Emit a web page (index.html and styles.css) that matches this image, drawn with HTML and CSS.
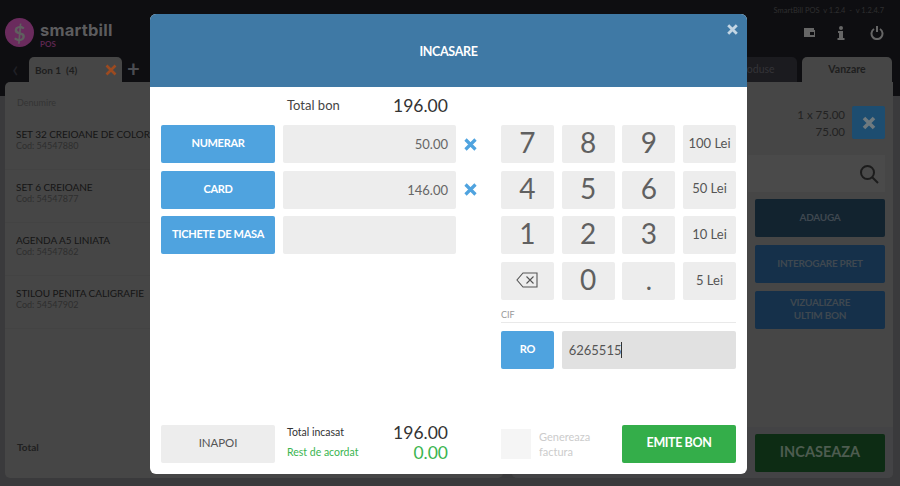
FILE: index.html
```html
<!DOCTYPE html>
<html lang="ro">
<head>
<meta charset="utf-8">
<title>SmartBill POS</title>
<link rel="stylesheet" href="styles.css">
</head>
<body>
<div class="app">
  <header class="topbar">
    <div class="logo">
      <span class="logo-mark">$</span>
      <div class="logo-text"><span class="logo-name">smartbill</span><span class="logo-sub">POS</span></div>
    </div>
    <div class="top-right">
      <div class="version">SmartBill POS &nbsp;v 1.2.4 &nbsp;- &nbsp;v 1.2.4.7</div>
      <div class="top-icons">
        <svg class="ti" width="12" height="12" viewBox="0 0 12 12"><path fill="#666" d="M1 1h10v2h1v7H1zM7 5v3h4V5z"/></svg>
        <svg class="ti" width="8" height="14" viewBox="0 0 8 14"><circle cx="4" cy="2" r="2" fill="#666"/><path fill="#666" d="M1 5h5v7h1.500v2H.5v-2H2V7H1z"/></svg>
        <svg class="ti" width="14" height="14" viewBox="0 0 14 14" fill="none" stroke="#666" stroke-width="2"><path d="M4 3a5.500 5.500 0 1 0 6 0M7 0v6"/></svg>
      </div>
    </div>
  </header>
  <div class="tabs">
    <div class="tabs-left">
      <span class="chev">&#8249;</span>
      <div class="tab bon"><span>Bon 1 &nbsp;(4)</span>
        <svg width="12" height="12" viewBox="0 0 12 12"><path d="M1.500 1.500l9 9M10.500 1.500l-9 9" stroke="#9c4a20" stroke-width="2.600"/></svg>
      </div>
      <span class="plus">+</span>
    </div>
    <div class="tabs-right">
      <div class="tab dark">Produse</div>
      <div class="tab active">Vanzare</div>
    </div>
  </div>
  <main class="panels">
    <section class="panel left">
      <div class="th">Denumire</div>
      <div class="row"><b>SET 32 CREIOANE DE COLOR</b><small>Cod: 54547880</small></div>
      <div class="row"><b>SET 6 CREIOANE</b><small>Cod: 54547877</small></div>
      <div class="row"><b>AGENDA A5 LINIATA</b><small>Cod: 54547862</small></div>
      <div class="row"><b>STILOU PENITA CALIGRAFIE</b><small>Cod: 54547902</small></div>
      <div class="total">Total</div>
    </section>
    <section class="panel right">
      <div class="summary">
        <div class="qty">1 x 75.00<br>75.00</div>
        <div class="del"><svg width="14" height="14" viewBox="0 0 14 14"><path d="M2 2l10 10M12 2L2 12" stroke="#6f7a7f" stroke-width="3.600"/></svg></div>
      </div>
      <div class="search"><svg width="20" height="20" viewBox="0 0 20 20" fill="none" stroke="#1c1c1c" stroke-width="2"><circle cx="8.500" cy="8.500" r="6.500"/><path d="M13 13l6 6"/></svg></div>
      <div class="act first">ADAUGA</div>
      <div class="act">INTEROGARE PRET</div>
      <div class="act">VIZUALIZARE<br>ULTIM BON</div>
      <div class="pay-zone"><div class="pay">INCASEAZA</div></div>
    </section>
  </main>
</div>

<div class="modal">
  <div class="modal-head">
    <h1>INCASARE</h1>
    <svg class="close" width="11" height="11" viewBox="0 0 11 11"><path d="M1.200 1.200l8.600 8.600M9.800 1.200l-8.600 8.600" stroke="#c3d6e4" stroke-width="2.800"/></svg>
  </div>
  <div class="modal-body">
    <div class="col-main">
      <div class="total-bon"><span>Total bon</span><strong>196.00</strong></div>
      <div class="pay-rows">
        <button class="btn blue">NUMERAR</button><div class="field">50.00</div>
        <svg class="rm" width="13" height="13" viewBox="0 0 13 13"><path d="M1.500 1.500l10 10M11.500 1.500l-10 10" stroke="#4fa3df" stroke-width="3.200"/></svg>
        <button class="btn blue">CARD</button><div class="field">146.00</div>
        <svg class="rm" width="13" height="13" viewBox="0 0 13 13"><path d="M1.500 1.500l10 10M11.500 1.500l-10 10" stroke="#4fa3df" stroke-width="3.200"/></svg>
        <button class="btn blue">TICHETE DE MASA</button><div class="field"></div><span></span>
      </div>
      <div class="foot-left">
        <button class="btn grey">INAPOI</button>
        <div class="sums">
          <div class="sum"><span>Total incasat</span><strong>196.00</strong></div>
          <div class="sum green"><span>Rest de acordat</span><strong>0.00</strong></div>
        </div>
      </div>
    </div>
    <div class="col-keys">
      <div class="keypad">
        <div class="key num">7</div><div class="key num">8</div><div class="key num">9</div><div class="key">100 Lei</div>
        <div class="key num">4</div><div class="key num">5</div><div class="key num">6</div><div class="key">50 Lei</div>
        <div class="key num">1</div><div class="key num">2</div><div class="key num">3</div><div class="key">10 Lei</div>
        <div class="key"><svg width="22" height="16" viewBox="0 0 22 16" fill="none" stroke="#555" stroke-width="1.100"><path d="M7 1h14v14H7L1 8z"/><path d="M10.500 4.500l7 7M17.500 4.500l-7 7"/></svg></div>
        <div class="key num">0</div><div class="key num dot">.</div><div class="key">5 Lei</div>
      </div>
      <div class="cif-label">CIF</div>
      <div class="cif">
        <button class="btn blue">RO</button>
        <div class="cif-input">6265515<i class="caret"></i></div>
      </div>
      <div class="foot-right">
        <div class="check"></div>
        <div class="check-label">Genereaza<br>factura</div>
        <button class="btn emit">EMITE BON</button>
      </div>
    </div>
  </div>
</div>
</body>
</html>
```
FILE: styles.css
```css
* { box-sizing: border-box; }
html, body { margin: 0; height: 486px; overflow: hidden; }
body { font-family: Lato, "Open Sans", sans-serif; background: #3a3a3c; color: #222; position: relative; }

.app { width: 900px; height: 486px; display: flex; flex-direction: column; background: linear-gradient(#0e0e11 96px, #3a3a3c 96px); }

.topbar { height: 57px; display: flex; justify-content: space-between; padding: 0 16px 0 5px; }
.logo { display: flex; align-items: flex-start; gap: 6px; padding-top: 18px; }
.logo-mark { width: 29px; height: 29px; border-radius: 50%; background: #6a2b5d; color: #5f5f5f; font: 700 21px/29px Lato, sans-serif; text-align: center; }
.logo-text { display: flex; flex-direction: column; }
.logo-name { font: 700 16.500px/16px Inter, Lato, sans-serif; color: #5c5c5e; letter-spacing: .2px; margin-top: 4px; }
.logo-sub { font: 700 8px/9px Lato, sans-serif; color: #5d2650; margin-top: 2px; }
.top-right { display: flex; flex-direction: column; align-items: flex-end; }
.version { font-size: 7.500px; line-height: 10px; margin-top: 6px; color: #2e2e30; }
.top-icons { display: flex; align-items: center; gap: 25px; margin-top: 10px; }
.top-icons .ti:first-child { margin-right: -3px; }

.tabs { height: 25px; display: flex; justify-content: space-between; padding: 0 8px 0 12px; }
.tabs-left, .tabs-right { display: flex; align-items: flex-start; }
.tabs-right { gap: 5px; }
.chev { font-size: 24px; line-height: 22px; width: 17px; color: #202026; }
.plus { font-size: 22px; line-height: 24px; color: #4b4c51; margin-left: 5px; font-weight: 700; }
.tab { height: 25px; border-radius: 5px 5px 0 0; font-size: 10.500px; }
.bon { width: 93px; background: #464646; display: flex; justify-content: space-between; align-items: center; padding: 0 5px 0 6px; font-weight: 700; color: #1e1e1e; font-size: 10px; }
.dark { width: 60px; background: #1b1b1f; color: #343438; line-height: 25px; text-align: right; padding-right: 24px; }
.active { width: 90px; background: #464646; text-align: center; line-height: 24px; font-weight: 700; color: #1e1e1e; }

.panels { flex: 1; display: flex; gap: 9px; padding: 0 7px 8px 5px; }
.panel { background: #464646; border-radius: 0 0 5px 5px; position: relative; }
.left { width: 498px; border-radius: 5px; display: flex; flex-direction: column; padding-top: 15px; }
.right { flex: 1; display: flex; flex-direction: column; align-items: flex-end; padding-right: 8px; }
.th { padding-left: 12px; font-size: 9px; line-height: 12px; color: #343434; margin-bottom: 8px; }
.row { height: 53px; padding: 11px 0 0 11px; display: flex; flex-direction: column; border-bottom: 1px solid #434343; }
.row b { font-weight: 400; font-size: 10px; line-height: 12px; color: #151515; white-space: nowrap; letter-spacing: -.05px; }
.row small { font-size: 9px; line-height: 11px; color: #2e2e2e; }
.total { margin-top: auto; padding: 0 0 25px 12px; font-weight: 700; font-size: 10px; color: #202020; }
.summary { display: flex; gap: 7px; margin-top: 24px; height: 33px; }
.qty { text-align: right; font-size: 11.500px; line-height: 16.500px; color: #222; padding-top: 1px; }
.del { width: 33px; height: 33px; background: #1d4d70; border-radius: 2px; display: flex; align-items: center; justify-content: center; }
.search { width: 137px; height: 37px; margin-top: 16px; background: #4a4a4a; display: flex; align-items: center; justify-content: flex-end; padding-right: 6px; }
.act { width: 130px; height: 38px; margin-top: 8px; background: #15304a; border-radius: 2px; color: #3f4850; font-size: 10px; line-height: 13px; font-weight: 700; letter-spacing: -.3px; display: flex; align-items: center; justify-content: center; text-align: center; padding-bottom: 2px; }
.first { background: #12232f; margin-top: 7px; }
.pay-zone { margin-top: auto; align-self: stretch; margin-right: -8px; height: 51px; padding: 7px 8px 0 0; background: #434345; display: flex; justify-content: flex-end; border-radius: 0 0 5px 5px; }
.pay { width: 130px; height: 38px; background: #0d2c14; border-radius: 2px; color: #4d5c50; font-weight: 700; font-size: 14.500px; line-height: 36px; text-align: center; }

.modal { position: absolute; left: 150px; top: 14px; width: 597px; height: 460px; background: #fff; border-radius: 6px; overflow: hidden; display: flex; flex-direction: column; }
.modal-head { height: 73px; background: #3f79a5; position: relative; flex: none; display: flex; align-items: center; justify-content: center; padding-top: 2px; }
.modal-head h1 { margin: 0; color: #fff; font-size: 12.500px; font-weight: 700; letter-spacing: -.35px; }
.close { position: absolute; right: 9px; top: 10px; }
.modal-body { flex: 1; display: flex; gap: 11px; padding: 0 11px 11px; }
.col-main { width: 329px; display: flex; flex-direction: column; }
.col-keys { width: 235px; display: flex; flex-direction: column; padding-top: 38px; }

.btn { border: 0; margin: 0; padding: 0 0 3px; border-radius: 2px; font-family: inherit; font-weight: 700; font-size: 11px; letter-spacing: -.3px; height: 38px; }
.blue { background: #4fa3df; color: #fff; }
.grey { background: #ededed; color: #555; width: 114px; font-weight: 400; font-size: 11.500px; letter-spacing: -.1px; }
.emit { background: #34ae4a; color: #fff; width: 114px; font-size: 12.500px; letter-spacing: -.4px; margin-left: auto; }

.total-bon { height: 36px; margin-bottom: 2px; display: flex; align-items: center; padding-left: 126px; color: #444; font-size: 13px; }
.total-bon span { width: 106px; }
.total-bon strong { font-weight: 400; font-size: 17.500px; color: #333; }
.pay-rows { display: grid; grid-template-columns: 114px 173.500px 13px; column-gap: 7.500px; row-gap: 7.500px; grid-auto-rows: 38px; align-items: center; }
.field { height: 38px; background: #ededed; border-radius: 2px; color: #666; font-size: 13px; line-height: 38px; text-align: right; padding-right: 8px; }
.foot-left { margin-top: auto; display: flex; gap: 12px; height: 38px; }
.sums { width: 161px; display: flex; flex-direction: column; margin-top: -3px; }
.sum { display: flex; justify-content: space-between; align-items: center; height: 20px; font-size: 10.500px; color: #333; }
.sum strong { font-weight: 400; font-size: 17.500px; }
.green { color: #3bb550; }

.keypad { display: grid; grid-template-columns: repeat(4, 1fr); gap: 7.700px; grid-auto-rows: 38px; }
.key { background: #ededed; border-radius: 2px; display: flex; align-items: center; justify-content: center; color: #555; font-size: 13px; padding-bottom: 3px; }
.num { font-size: 28px; font-weight: 400; color: #606060; padding-bottom: 4px; }
.dot { padding: 0; font-weight: 700; font-size: 22px; }
.cif-label { margin-top: 9px; height: 14px; line-height: 12px; font-size: 9px; color: #999; border-bottom: 1px solid #e9e9e9; }
.cif { display: grid; grid-template-columns: 53px 1fr; gap: 7.700px; margin-top: 8px; height: 38px; }
.cif-input { background: #e1e1e1; border-radius: 2px; color: #555; font-size: 13px; padding-left: 7px; line-height: 38px; }
.caret { display: inline-block; width: 1px; height: 16px; background: #333; vertical-align: -3px; }
.foot-right { margin-top: auto; display: flex; align-items: center; height: 38px; }
.check { width: 30px; height: 30px; background: #f5f5f5; }
.check-label { margin-left: 8px; font-size: 11px; line-height: 15.500px; color: #ccc; }
```
